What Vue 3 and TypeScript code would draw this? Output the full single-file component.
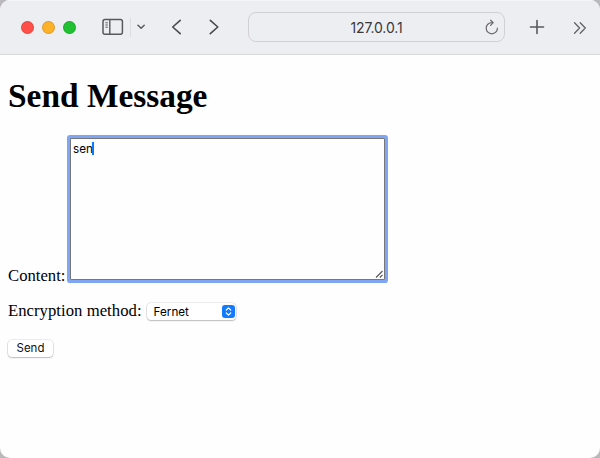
<script setup lang="ts">
import { ref } from 'vue'

const address = ref<string>('127.0.0.1')
const content = ref<string>('sen')
const method = ref<string>('Fernet')
const lights: string[] = ['red', 'amber', 'green']
</script>

<template>
  <div class="backdrop">
    <div class="window">
      <header class="toolbar">
        <div class="lights">
          <i v-for="l in lights" :key="l" :class="['light', l]"></i>
        </div>
        <svg class="sidebar" width="22" height="18" viewBox="0 0 22 18" fill="none" stroke="#59595c">
          <rect x="1" y="1.6" width="19.4" height="14.6" rx="2" stroke-width="1.5" />
          <path d="M7.8 1.6v14.6" stroke-width="1.4" />
          <path d="M3.4 4.8h2.4M3.4 7h2.4M3.4 9.2h2.4" stroke-width="1" />
        </svg>
        <span class="divider"></span>
        <svg class="drop" width="10" height="8" viewBox="0 0 10 8" fill="none" stroke="#59595c" stroke-width="1.5" stroke-linecap="round" stroke-linejoin="round">
          <path d="M2 2.3L5.1 5.3L8.2 2.3" />
        </svg>
        <svg class="back" width="12" height="18" viewBox="0 0 12 18" fill="none" stroke="#4a4a4d" stroke-width="1.6" stroke-linecap="round" stroke-linejoin="round">
          <path d="M9.2 2.3L1.7 9L9.2 15.7" />
        </svg>
        <svg class="forward" width="12" height="18" viewBox="0 0 12 18" fill="none" stroke="#4a4a4d" stroke-width="1.6" stroke-linecap="round" stroke-linejoin="round">
          <path d="M2.3 2.3L9.8 9L2.3 15.7" />
        </svg>
        <div class="address">
          <span>{{ address }}</span>
          <svg class="reload" width="14" height="16" viewBox="0 0 14 16" fill="none" stroke="#68686b" stroke-width="1.2" stroke-linecap="round" stroke-linejoin="round">
            <path d="M7.9 3.6H6.8A5.6 5.6 0 1 0 12.4 9.2M5.6 1.2L8.2 3.6L5.6 6.3" />
          </svg>
        </div>
        <svg class="plus" width="16" height="16" viewBox="0 0 16 16" fill="none" stroke="#59595c" stroke-width="1.6" stroke-linecap="round">
          <path d="M8 1.5v13M1.5 8h13" />
        </svg>
        <svg class="more" width="14" height="14" viewBox="0 0 14 14" fill="none" stroke="#626265" stroke-width="1.3" stroke-linecap="round" stroke-linejoin="round">
          <path d="M1.5 1.8L6.6 7L1.5 12.2M7.2 1.8L12.3 7L7.2 12.2" />
        </svg>
      </header>
      <main class="page">
        <h1>Send Message</h1>
        <div class="row content-row">
          <span class="label">Content:</span>
          <div class="textarea" role="textbox" aria-multiline="true">
            <span>{{ content }}</span><i class="caret"></i>
            <svg class="grip" width="9" height="9" viewBox="0 0 9 9" stroke="#555" stroke-width="1.1">
              <path d="M1 7.5L7.5 1M4.8 7.5L7.5 4.8" />
            </svg>
          </div>
        </div>
        <div class="row method-row">
          <span class="label">Encryption method:</span>
          <div class="select" role="combobox">
            <span>{{ method }}</span>
            <svg width="13" height="13" viewBox="0 0 13 13" fill="none" stroke="#fff" stroke-width="1.2" stroke-linecap="round" stroke-linejoin="round">
              <rect width="13" height="13" rx="3" fill="#127aff" stroke="none" />
              <path d="M4.3 5L6.5 2.9L8.7 5M4.3 8L6.5 10.1L8.7 8" />
            </svg>
          </div>
        </div>
        <button class="send" type="button">Send</button>
      </main>
    </div>
  </div>
</template>

<style>
body {
  margin: 0;
}
</style>

<style scoped>
.backdrop {
  width: 600px;
  height: 458px;
  background: #b9b9bb;
  overflow: hidden;
}
.window {
  height: 458px;
  border-radius: 10px;
  background: #fefdff;
  overflow: hidden;
}
.toolbar {
  box-sizing: border-box;
  display: flex;
  align-items: center;
  height: 55px;
  padding: 0 13.5px 0 20.5px;
  background: #edeef2;
  border-top: 1px solid #f5f5f7;
  border-bottom: 1px solid #d9d9dc;
}
.toolbar svg {
  flex: none;
}
.lights {
  display: flex;
  gap: 8px;
}
.light {
  box-sizing: border-box;
  width: 13px;
  height: 13px;
  border-radius: 50%;
  border: 0.5px solid rgba(0, 0, 0, 0.12);
}
.red { background: #fe5049; }
.amber { background: #fdb128; }
.green { background: #20c032; }
.sidebar {
  margin-left: 26.5px;
  margin-bottom: 2px;
}
.divider {
  width: 1px;
  height: 19px;
  margin-left: 6px;
  background: #dddde1;
}
.drop { margin-left: 5px; margin-bottom: 1px; }
.back { margin-left: 24.5px; }
.forward { margin-left: 25px; }
.back, .forward { margin-bottom: 2px; }
.address {
  box-sizing: border-box;
  position: relative;
  display: flex;
  align-items: center;
  justify-content: center;
  width: 257px;
  height: 30px;
  margin-left: 28.5px;
  margin-bottom: 1px;
  padding-top: 1px;
  border: 1px solid #d1d1d5;
  border-radius: 8px;
  font: 14px/18px Inter, sans-serif;
  letter-spacing: -0.15px;
  color: #38383b;
}
.reload {
  position: absolute;
  right: 5px;
  top: 6px;
}
.plus { margin-left: 24px; margin-bottom: 2px; }
.more { margin-left: auto; }
.page {
  padding: 21px 8px 0;
  font: 16.7px/20px "Liberation Serif", serif;
  color: #000;
}
h1 {
  margin: 0;
  font-size: 33.4px;
  line-height: 40px;
  font-weight: bold;
}
.row {
  display: flex;
}
.content-row {
  align-items: flex-end;
  margin-top: 22px;
}
.content-row .label {
  width: 62px;
  margin-bottom: -6px;
}
.textarea {
  box-sizing: border-box;
  position: relative;
  display: flex;
  align-items: flex-start;
  width: 315px;
  height: 142px;
  padding: 3px 2px;
  border: 1px solid #777779;
  box-shadow: 0 0 0 3px #7ea6f2;
  border-radius: 1px;
  background: #fefdff;
  font: 11.7px/15px Inter, sans-serif;
}
.caret {
  width: 2px;
  height: 13px;
  margin-left: -0.5px;
  background: #087aff;
}
.grip {
  position: absolute;
  right: 0;
  bottom: 0;
}
.method-row {
  align-items: center;
  margin-top: 21px;
}
.method-row .label {
  letter-spacing: 0.03px;
}
.select {
  box-sizing: border-box;
  display: flex;
  align-items: center;
  justify-content: space-between;
  width: 89px;
  height: 17px;
  margin: 1px 0 0 5px;
  padding: 0 1px 0 7px;
  border-radius: 4px;
  background: #fff;
  box-shadow: 0 0 0 0.6px rgba(0, 0, 0, 0.14), 0 1px 1.5px rgba(0, 0, 0, 0.2);
  font: 11.7px/16px Inter, sans-serif;
}
.send {
  display: block;
  width: 45px;
  height: 17px;
  margin: 19px 0 0;
  padding: 0;
  border: 0;
  border-radius: 4px;
  background: #fff;
  box-shadow: 0 0 0 0.6px rgba(0, 0, 0, 0.14), 0 1px 1.5px rgba(0, 0, 0, 0.2);
  font: 11.5px/17px Inter, sans-serif;
  color: #111;
}
</style>
